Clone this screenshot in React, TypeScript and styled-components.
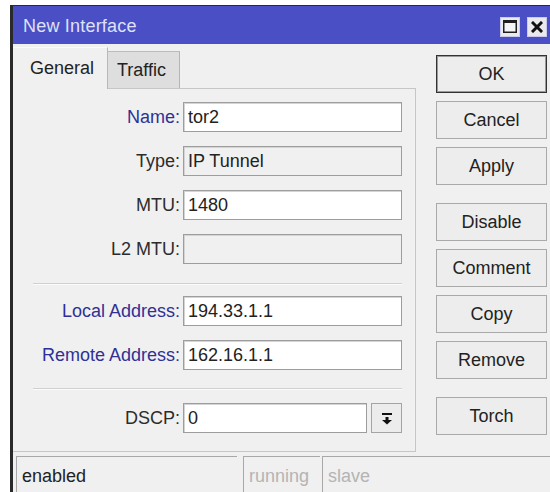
import React from "react";
import styled, { createGlobalStyle } from "styled-components";

const Global = createGlobalStyle`
  html, body {
    margin: 0;
    padding: 0;
    background: #ffffff;
    width: 550px;
    height: 492px;
    overflow: hidden;
  }
  body {
    font-family: "Liberation Sans", Arial, sans-serif;
    font-size: 18px;
    color: #222;
  }
`;

const Window = styled.div`
  margin: 5px 0 0 10px;
  width: 545px;
  height: 487px;
  box-sizing: border-box;
  border-left: 3px solid #2a2a2a;
  border-top: 1px solid #2a2a2a;
  background: #f0f0f0;
  display: flex;
  flex-direction: column;
`;

const TitleBar = styled.div`
  height: 38px;
  flex: none;
  background: #4a4fc6;
  display: flex;
  align-items: center;
  padding: 3px 8px 0 10px;
  box-sizing: border-box;
`;

const Title = styled.div`
  flex: 1;
  color: #dfe1f7;
  font-size: 18px;
  letter-spacing: 0.2px;
`;

const TitleButtons = styled.div`
  display: flex;
  gap: 7px;
`;

const TitleButton = styled.div`
  width: 20px;
  height: 20px;
  background: #e9e9ee;
  border: 1px solid #c9cbe8;
  box-sizing: border-box;
  display: flex;
  align-items: center;
  justify-content: center;
`;

const Body = styled.div`
  flex: 1;
  display: flex;
  gap: 20px;
`;

const LeftColumn = styled.div`
  width: 403px;
  padding-top: 3px;
  display: flex;
  flex-direction: column;
`;

const TabRow = styled.div`
  height: 41px;
  display: flex;
  align-items: flex-end;
`;

const Tab = styled.div<{ $active?: boolean }>`
  box-sizing: border-box;
  display: flex;
  align-items: center;
  font-size: 18px;
  color: #222;
  ${(p) =>
    p.$active
      ? `
    width: 95px;
    height: 42px;
    margin-bottom: -1px;
    padding-left: 17px;
    background: #f0f0f0;
    border-top: 1px solid #fafafa;
    border-right: 1px solid #b8b8b8;
    position: relative;
    z-index: 1;
  `
      : `
    width: 72px;
    height: 37px;
    padding-left: 9px;
    background: #dedede;
    border-top: 1px solid #bcbcbc;
    border-right: 1px solid #b4b4b4;
  `}
`;

const Panel = styled.div`
  height: 364px;
  box-sizing: border-box;
  border-top: 1px solid #c6c6c6;
  border-right: 1px solid #c6c6c6;
  border-bottom: 1px solid #c6c6c6;
  padding-top: 13px;
  display: flex;
  flex-direction: column;
`;

const FieldGroup = styled.div`
  display: flex;
  flex-direction: column;
  gap: 14px;
`;

const FieldRow = styled.div`
  display: grid;
  grid-template-columns: 167px 219px;
  column-gap: 3px;
  align-items: center;
  height: 30px;
`;

const Label = styled.div<{ $accent?: boolean }>`
  text-align: right;
  white-space: nowrap;
  font-size: 18px;
  color: ${(p) => (p.$accent ? "#2e3196" : "#2c2c2c")};
`;

const Input = styled.div<{ $disabled?: boolean }>`
  height: 30px;
  box-sizing: border-box;
  border: 1px solid #9d9d9d;
  box-shadow: inset 1px 1px 0 #d4d4d4;
  background: ${(p) => (p.$disabled ? "#f0f0f0" : "#ffffff")};
  padding-left: 4px;
  display: flex;
  align-items: center;
  font-size: 18px;
  color: #222;
  flex: 1;
`;

const ComboCell = styled.div`
  display: flex;
  gap: 4px;
`;

const DropButton = styled.div`
  width: 31px;
  height: 30px;
  flex: none;
  box-sizing: border-box;
  border: 1px solid #a4a4a4;
  background: #ececec;
  display: flex;
  align-items: center;
  justify-content: center;
`;

const Separator = styled.div<{ $above: number; $below: number }>`
  margin: ${(p) => `${p.$above}px 0 ${p.$below}px 20px`};
  width: 369px;
  height: 1px;
  background: #d0d0d0;
  border-bottom: 1px solid #fbfbfb;
`;

const ButtonColumn = styled.div`
  width: 111px;
  padding-top: 11px;
  display: flex;
  flex-direction: column;
`;

const ButtonGroup = styled.div<{ $after?: number }>`
  display: flex;
  flex-direction: column;
  gap: 8px;
  margin-bottom: ${(p) => p.$after ?? 0}px;
`;

const Button = styled.div<{ $default?: boolean }>`
  height: 38px;
  box-sizing: border-box;
  display: flex;
  align-items: center;
  justify-content: center;
  font-size: 18px;
  color: #222;
  background: #ededed;
  border: 1px solid ${(p) => (p.$default ? "#333333" : "#a9a9a9")};
  box-shadow: ${(p) => (p.$default ? "inset 0 0 0 1px #9a9a9a" : "none")};
`;

const StatusBar = styled.div`
  margin-top: 4px;
  height: 36px;
  display: flex;
  padding-left: 3px;
`;

const StatusCell = styled.div<{ $width?: number; $muted?: boolean; $gap?: number }>`
  box-sizing: border-box;
  ${(p) => (p.$width ? `width: ${p.$width}px; flex: none;` : "flex: 1;")}
  margin-right: ${(p) => p.$gap ?? 0}px;
  border-top: 1px solid #a8a8a8;
  border-left: 1px solid #a8a8a8;
  padding-left: 5px;
  padding-top: 3px;
  display: flex;
  align-items: center;
  font-size: 18px;
  color: ${(p) => (p.$muted ? "#b4b4b4" : "#222")};
`;

const MaximizeIcon = () => (
  <svg width="14" height="13" viewBox="0 0 14 13">
    <rect x="0.75" y="0.75" width="12.5" height="11.5" fill="#f4f4f4" stroke="#1e1e1e" strokeWidth="1.5" />
    <rect x="0" y="0" width="14" height="3" fill="#1e1e1e" />
  </svg>
);

const CloseIcon = () => (
  <svg width="12" height="12" viewBox="0 0 12 12">
    <path d="M2 2 L10 10 M10 2 L2 10" stroke="#111" strokeWidth="3" strokeLinecap="square" />
  </svg>
);

const DropIcon = () => (
  <svg width="12" height="13" viewBox="0 0 12 13">
    <rect x="1" y="1" width="10" height="2" fill="#111" />
    <rect x="4.5" y="5" width="3" height="3" fill="#111" />
    <path d="M1 8 L11 8 L6 12.5 Z" fill="#111" />
  </svg>
);

type Field = { label: string; value: string; accent?: boolean; disabled?: boolean };

const topFields: Field[] = [
  { label: "Name:", value: "tor2", accent: true },
  { label: "Type:", value: "IP Tunnel", disabled: true },
  { label: "MTU:", value: "1480" },
  { label: "L2 MTU:", value: "", disabled: true },
];

const addressFields: Field[] = [
  { label: "Local Address:", value: "194.33.1.1", accent: true },
  { label: "Remote Address:", value: "162.16.1.1", accent: true },
];

const renderField = (f: Field) => (
  <FieldRow key={f.label}>
    <Label $accent={f.accent}>{f.label}</Label>
    <Input $disabled={f.disabled}>{f.value}</Input>
  </FieldRow>
);

export default function App() {
  return (
    <>
      <Global />
      <Window>
        <TitleBar>
          <Title>New Interface</Title>
          <TitleButtons>
            <TitleButton>
              <MaximizeIcon />
            </TitleButton>
            <TitleButton>
              <CloseIcon />
            </TitleButton>
          </TitleButtons>
        </TitleBar>
        <Body>
          <LeftColumn>
            <TabRow>
              <Tab $active>General</Tab>
              <Tab>Traffic</Tab>
            </TabRow>
            <Panel>
              <FieldGroup>{topFields.map(renderField)}</FieldGroup>
              <Separator $above={19} $below={11} />
              <FieldGroup>{addressFields.map(renderField)}</FieldGroup>
              <Separator $above={18} $below={13} />
              <FieldRow>
                <Label>DSCP:</Label>
                <ComboCell>
                  <Input>0</Input>
                  <DropButton>
                    <DropIcon />
                  </DropButton>
                </ComboCell>
              </FieldRow>
            </Panel>
          </LeftColumn>
          <ButtonColumn>
            <ButtonGroup $after={18}>
              <Button $default>OK</Button>
              <Button>Cancel</Button>
              <Button>Apply</Button>
            </ButtonGroup>
            <ButtonGroup $after={18}>
              <Button>Disable</Button>
              <Button>Comment</Button>
              <Button>Copy</Button>
              <Button>Remove</Button>
            </ButtonGroup>
            <ButtonGroup>
              <Button>Torch</Button>
            </ButtonGroup>
          </ButtonColumn>
        </Body>
        <StatusBar>
          <StatusCell $width={221} $gap={6}>enabled</StatusCell>
          <StatusCell $width={77} $gap={2} $muted>running</StatusCell>
          <StatusCell $muted>slave</StatusCell>
        </StatusBar>
      </Window>
    </>
  );
}
